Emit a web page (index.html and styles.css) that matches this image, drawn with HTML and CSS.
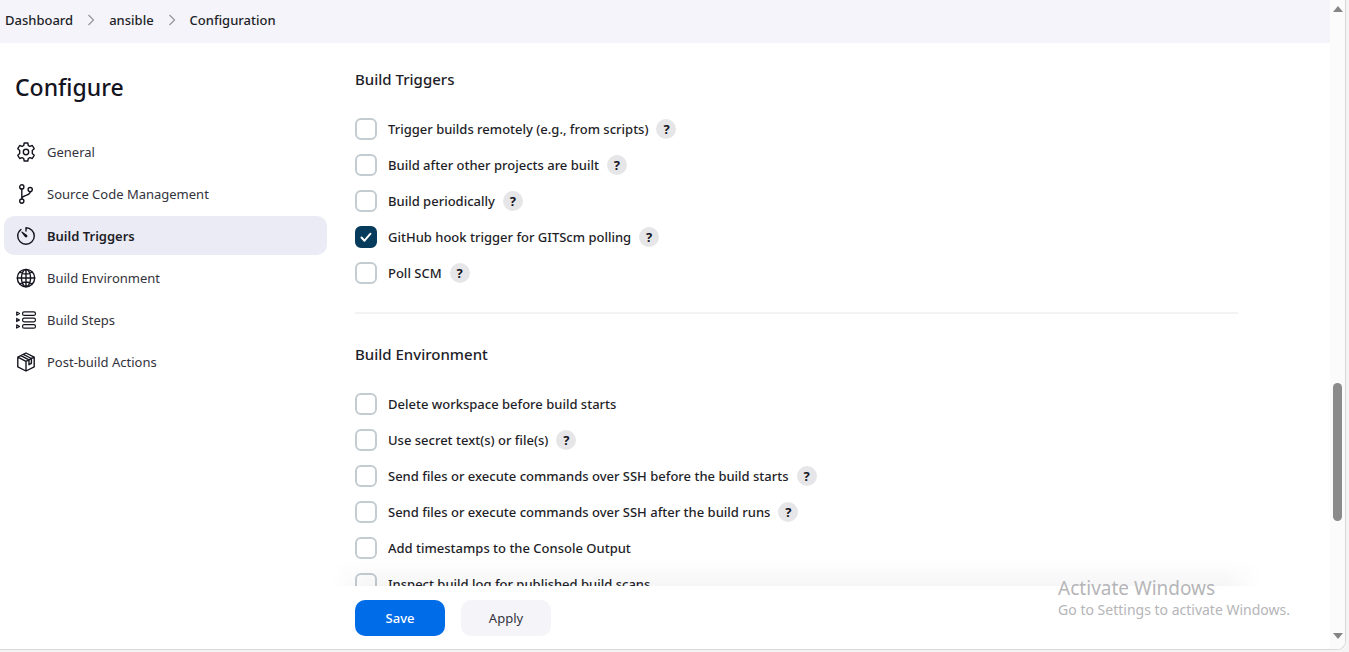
FILE: index.html
```html
<!DOCTYPE html>
<html lang="en">
<head>
<meta charset="utf-8">
<title>ansible Config</title>
<link rel="stylesheet" href="styles.css">
</head>
<body>
<div class="window">
  <div class="app">
    <nav class="breadcrumbs" aria-label="Breadcrumb">
      <a href="#">Dashboard</a>
      <svg class="chevron" viewBox="0 0 8 12"><path d="M1.5 1l5 5-5 5"/></svg>
      <a href="#">ansible</a>
      <svg class="chevron" viewBox="0 0 8 12"><path d="M1.5 1l5 5-5 5"/></svg>
      <a href="#">Configuration</a>
    </nav>
    <div class="columns">
      <aside class="sidebar">
        <h1 class="title">Configure</h1>
        <nav class="tasks">
          <a class="task" href="#general">
            <svg class="icon" viewBox="0 0 20 20"><path d="M8.2 1h3.6l.5 2.5 1.5.9 2.5-.9 1.9 3.2-1.9 1.7v3.2l1.9 1.7-1.9 3.2-2.5-.9-1.5.9-.5 2.5H8.2l-.5-2.5-1.5-.9-2.5.9-1.9-3.2 1.9-1.7V8.4L1.8 6.7l1.9-3.2 2.5.9 1.5-.9z" stroke-width="1.4"/><circle cx="10" cy="10" r="2.7" stroke-width="1.4"/></svg>
            <span>General</span>
          </a>
          <a class="task" href="#scm">
            <svg class="icon" viewBox="0 0 20 20"><g stroke-width="1.4"><circle cx="5.8" cy="2.9" r="2.1"/><circle cx="5.8" cy="17.1" r="2.1"/><circle cx="14.2" cy="5.6" r="2.1"/><path d="M5.8 5v10M14.2 7.7c0 4.6-8.4 2.6-8.4 7.3"/></g></svg>
            <span>Source Code Management</span>
          </a>
          <a class="task task-active" href="#build-triggers" aria-current="true">
            <svg class="icon" viewBox="0 0 512 512"><path d="M256 44v84M256 44c117 0 212 95 212 212s-95 212-212 212S44 373 44 256c0-69 32-129 82-168"/><path class="solid" d="M282 230c14 14 14 38 0 52s-38 14-52 0L142 166c-10-15 7-32 22-22z"/></svg>
            <span>Build Triggers</span>
          </a>
          <a class="task" href="#build-environment">
            <svg class="icon" viewBox="0 0 512 512"><circle cx="256" cy="256" r="222"/><path d="M256 34c-60 0-118 99-118 222s58 222 118 222 118-99 118-222S316 34 256 34zM256 34v444M478 256H34M108 108c40 29 92 46 148 46s108-17 148-46M404 404c-40-29-92-46-148-46s-108 17-148 46"/></svg>
            <span>Build Environment</span>
          </a>
          <a class="task" href="#build-steps">
            <svg class="icon icon-thin" viewBox="0 0 20 20"><rect x="6.6" y="1.8" width="12.8" height="3.6" rx="1.5"/><rect x="6.6" y="8.2" width="12.8" height="3.6" rx="1.5"/><rect x="6.6" y="14.6" width="12.8" height="3.6" rx="1.5"/><path d="M.7 2l2.8 1.6L.7 5.2zM.7 8.4L3.5 10 .7 11.6zM.7 14.8l2.8 1.6L.7 18z"/></svg>
            <span>Build Steps</span>
          </a>
          <a class="task" href="#post-build">
            <svg class="icon" viewBox="0 0 20 20"><g stroke-width="1.4"><path d="M10 1l8.2 4.2v9.6L10 19l-8.2-4.2V5.200zM1.800 5.200L10 9.400l8.200-4.200M10 9.400V19M4.800 3.700l8.200 4.200M7.400 2.300l8 4.200M13 7.900v4.800l2.400-1.400V6.500"/></g></svg>
            <span>Post-build Actions</span>
          </a>
        </nav>
      </aside>
      <main class="main">
        <form class="form">
          <div class="sections">
            <section class="section" id="build-triggers">
              <h2 class="section-title">Build Triggers</h2>
              <div class="options">
                <div class="option"><input type="checkbox" id="remote"><label for="remote">Trigger builds remotely (e.g., from scripts)</label><button type="button" class="help">?</button></div>
                <div class="option"><input type="checkbox" id="after"><label for="after">Build after other projects are built</label><button type="button" class="help">?</button></div>
                <div class="option"><input type="checkbox" id="periodic"><label for="periodic">Build periodically</label><button type="button" class="help">?</button></div>
                <div class="option"><span class="checked-box"><input type="checkbox" id="hook" checked><svg class="tick" viewBox="0 0 22 22"><path d="M6.500 11.500l3 3.200 6-7"/></svg></span><label for="hook">GitHub hook trigger for GITScm polling</label><button type="button" class="help">?</button></div>
                <div class="option"><input type="checkbox" id="poll"><label for="poll">Poll SCM</label><button type="button" class="help">?</button></div>
              </div>
            </section>
            <section class="section" id="build-environment">
              <h2 class="section-title">Build Environment</h2>
              <div class="options">
                <div class="option"><input type="checkbox" id="delete"><label for="delete">Delete workspace before build starts</label></div>
                <div class="option"><input type="checkbox" id="secret"><label for="secret">Use secret text(s) or file(s)</label><button type="button" class="help">?</button></div>
                <div class="option"><input type="checkbox" id="ssh-before"><label for="ssh-before">Send files or execute commands over SSH before the build starts</label><button type="button" class="help">?</button></div>
                <div class="option"><input type="checkbox" id="ssh-after"><label for="ssh-after">Send files or execute commands over SSH after the build runs</label><button type="button" class="help">?</button></div>
                <div class="option"><input type="checkbox" id="timestamps"><label for="timestamps">Add timestamps to the Console Output</label></div>
                <div class="option"><input type="checkbox" id="scans"><label for="scans">Inspect build log for published build scans</label></div>
              </div>
            </section>
          </div>
          <div class="actions">
            <button type="submit" class="button button-primary">Save</button>
            <button type="button" class="button">Apply</button>
          </div>
        </form>
      </main>
    </div>
  </div>
  <div class="scrollbar" aria-hidden="true">
    <svg class="arrow" viewBox="0 0 10 6"><path d="M0 6l5-6 5 6z"/></svg>
    <div class="track"><div class="thumb"></div></div>
    <svg class="arrow" viewBox="0 0 10 6"><path d="M0 0l5 6 5-6z"/></svg>
  </div>
  <div class="watermark">
    <p class="watermark-title">Activate Windows</p>
    <p class="watermark-text">Go to Settings to activate Windows.</p>
  </div>
</div>
</body>
</html>
```
FILE: styles.css
```css
* { box-sizing: border-box; }

body {
  margin: 0;
  height: 100vh;
  padding: 0 3px 2px 0;
  background: #f4f4f4;
  color: #1e1e28;
  font: 500 13px/22px "Noto Sans", "Open Sans", sans-serif;
  overflow: hidden;
}

h1, h2, p { margin: 0; }
a { color: inherit; text-decoration: none; }
button, input { font: inherit; margin: 0; }

.window {
  position: relative;
  display: flex;
  height: 100%;
  background: #fff;
  border: solid #d8d8d8;
  border-width: 0 1px 1px 0;
  border-bottom-right-radius: 9px;
  overflow: hidden;
}

.app {
  flex: 1;
  min-width: 0;
  display: flex;
  flex-direction: column;
}

.breadcrumbs {
  flex: none;
  display: flex;
  align-items: center;
  gap: 14px;
  height: 43px;
  padding: 0 5px 3px;
  background: #f4f4fa;
}

.chevron {
  width: 8px;
  height: 12px;
  fill: none;
  stroke: #94949c;
  stroke-width: 1.2;
}

.columns {
  flex: 1;
  min-height: 0;
  display: flex;
}

.sidebar {
  flex: none;
  width: 327px;
  padding: 27px 0 0 4px;
}

.title {
  padding-left: 11px;
  color: #14141f;
  font-size: 23px;
  font-weight: 500;
  line-height: 34px;
}

.tasks {
  display: flex;
  flex-direction: column;
  gap: 3px;
  padding-top: 28px;
}

.task {
  display: flex;
  align-items: center;
  gap: 11px;
  height: 39px;
  padding: 0 12px;
  border-radius: 10px;
  color: #33333d;
  font-weight: 400;
}

.task-active {
  background: #ebebf5;
  color: #1e1e28;
  font-weight: 600;
}

.icon {
  width: 20px;
  height: 20px;
  fill: none;
  stroke: #14141f;
  stroke-width: 36;
  stroke-linecap: round;
  stroke-linejoin: round;
}

.icon-thin { stroke-width: 1.2; }
.icon .solid { fill: #14141f; stroke: none; }

.main {
  flex: 1;
  min-width: 0;
  padding: 0 92px 0 28px;
}

.form {
  display: flex;
  flex-direction: column;
  height: 100%;
}

.sections {
  flex: 1;
  min-height: 0;
  overflow: hidden;
  padding-top: 24px;
}

.section + .section {
  margin-top: 28px;
  padding-top: 28px;
  border-top: 2px solid #f3f3f5;
}

.section-title {
  font-size: 15px;
  font-weight: 500;
  line-height: 24px;
}

.options {
  display: flex;
  flex-direction: column;
  gap: 14px;
  padding-top: 27px;
}

.option {
  display: flex;
  align-items: center;
  height: 22px;
}

.option label { padding-left: 11px; }

.option input {
  appearance: none;
  display: block;
  width: 22px;
  height: 22px;
  border: 2px solid #c3ccd1;
  border-radius: 6px;
  background: #fff;
}

.option input:checked {
  border-color: #063b5c;
  background: #063b5c;
}

.checked-box { display: grid; }
.checked-box > * { grid-area: 1 / 1; }

.tick {
  width: 22px;
  height: 22px;
  fill: none;
  stroke: #fff;
  stroke-width: 2;
  stroke-linecap: round;
  stroke-linejoin: round;
  pointer-events: none;
}

.help {
  width: 20px;
  height: 20px;
  margin-left: 8px;
  padding: 0;
  border: 0;
  border-radius: 50%;
  background: #e6e6e8;
  color: #14141f;
  font-size: 13px;
  font-weight: 700;
  line-height: 20px;
}

.actions {
  position: relative;
  flex: none;
  display: flex;
  gap: 16px;
  padding: 14px 0 13px;
  background: #fff;
}

.actions::before {
  content: "";
  position: absolute;
  right: -24px;
  bottom: 100%;
  left: -24px;
  height: 28px;
  background: linear-gradient(rgba(20, 20, 60, 0), rgba(20, 20, 60, 0.04));
  mask-image: linear-gradient(90deg, transparent, #000 36px, #000 calc(100% - 36px), transparent);
  pointer-events: none;
}

.button {
  width: 90px;
  height: 36px;
  padding: 0;
  border: 0;
  border-radius: 10px;
  background: #f4f4f9;
  color: #33333d;
  font-weight: 400;
}

.button-primary {
  background: #006ce8;
  color: #fff;
  font-weight: 500;
}

.scrollbar {
  flex: none;
  display: flex;
  flex-direction: column;
  align-items: center;
  width: 15px;
  padding: 6px 0 10px;
  background: #fbfbfb;
}

.arrow {
  flex: none;
  width: 10px;
  height: 6px;
  fill: #858585;
}

.track {
  flex: 1;
  display: flex;
  flex-direction: column;
}

.track::before { content: ""; flex: 371; }
.track::after { content: ""; flex: 112; }

.thumb {
  flex: 138;
  width: 9px;
  border-radius: 5px;
  background: #8b8b8b;
}

.watermark {
  position: absolute;
  right: 55px;
  bottom: 29px;
  color: #b5b5b8;
  font-weight: 400;
}

.watermark-title {
  font-size: 19px;
  line-height: 24px;
}

.watermark-text {
  font-size: 14px;
  line-height: 20px;
}
```
